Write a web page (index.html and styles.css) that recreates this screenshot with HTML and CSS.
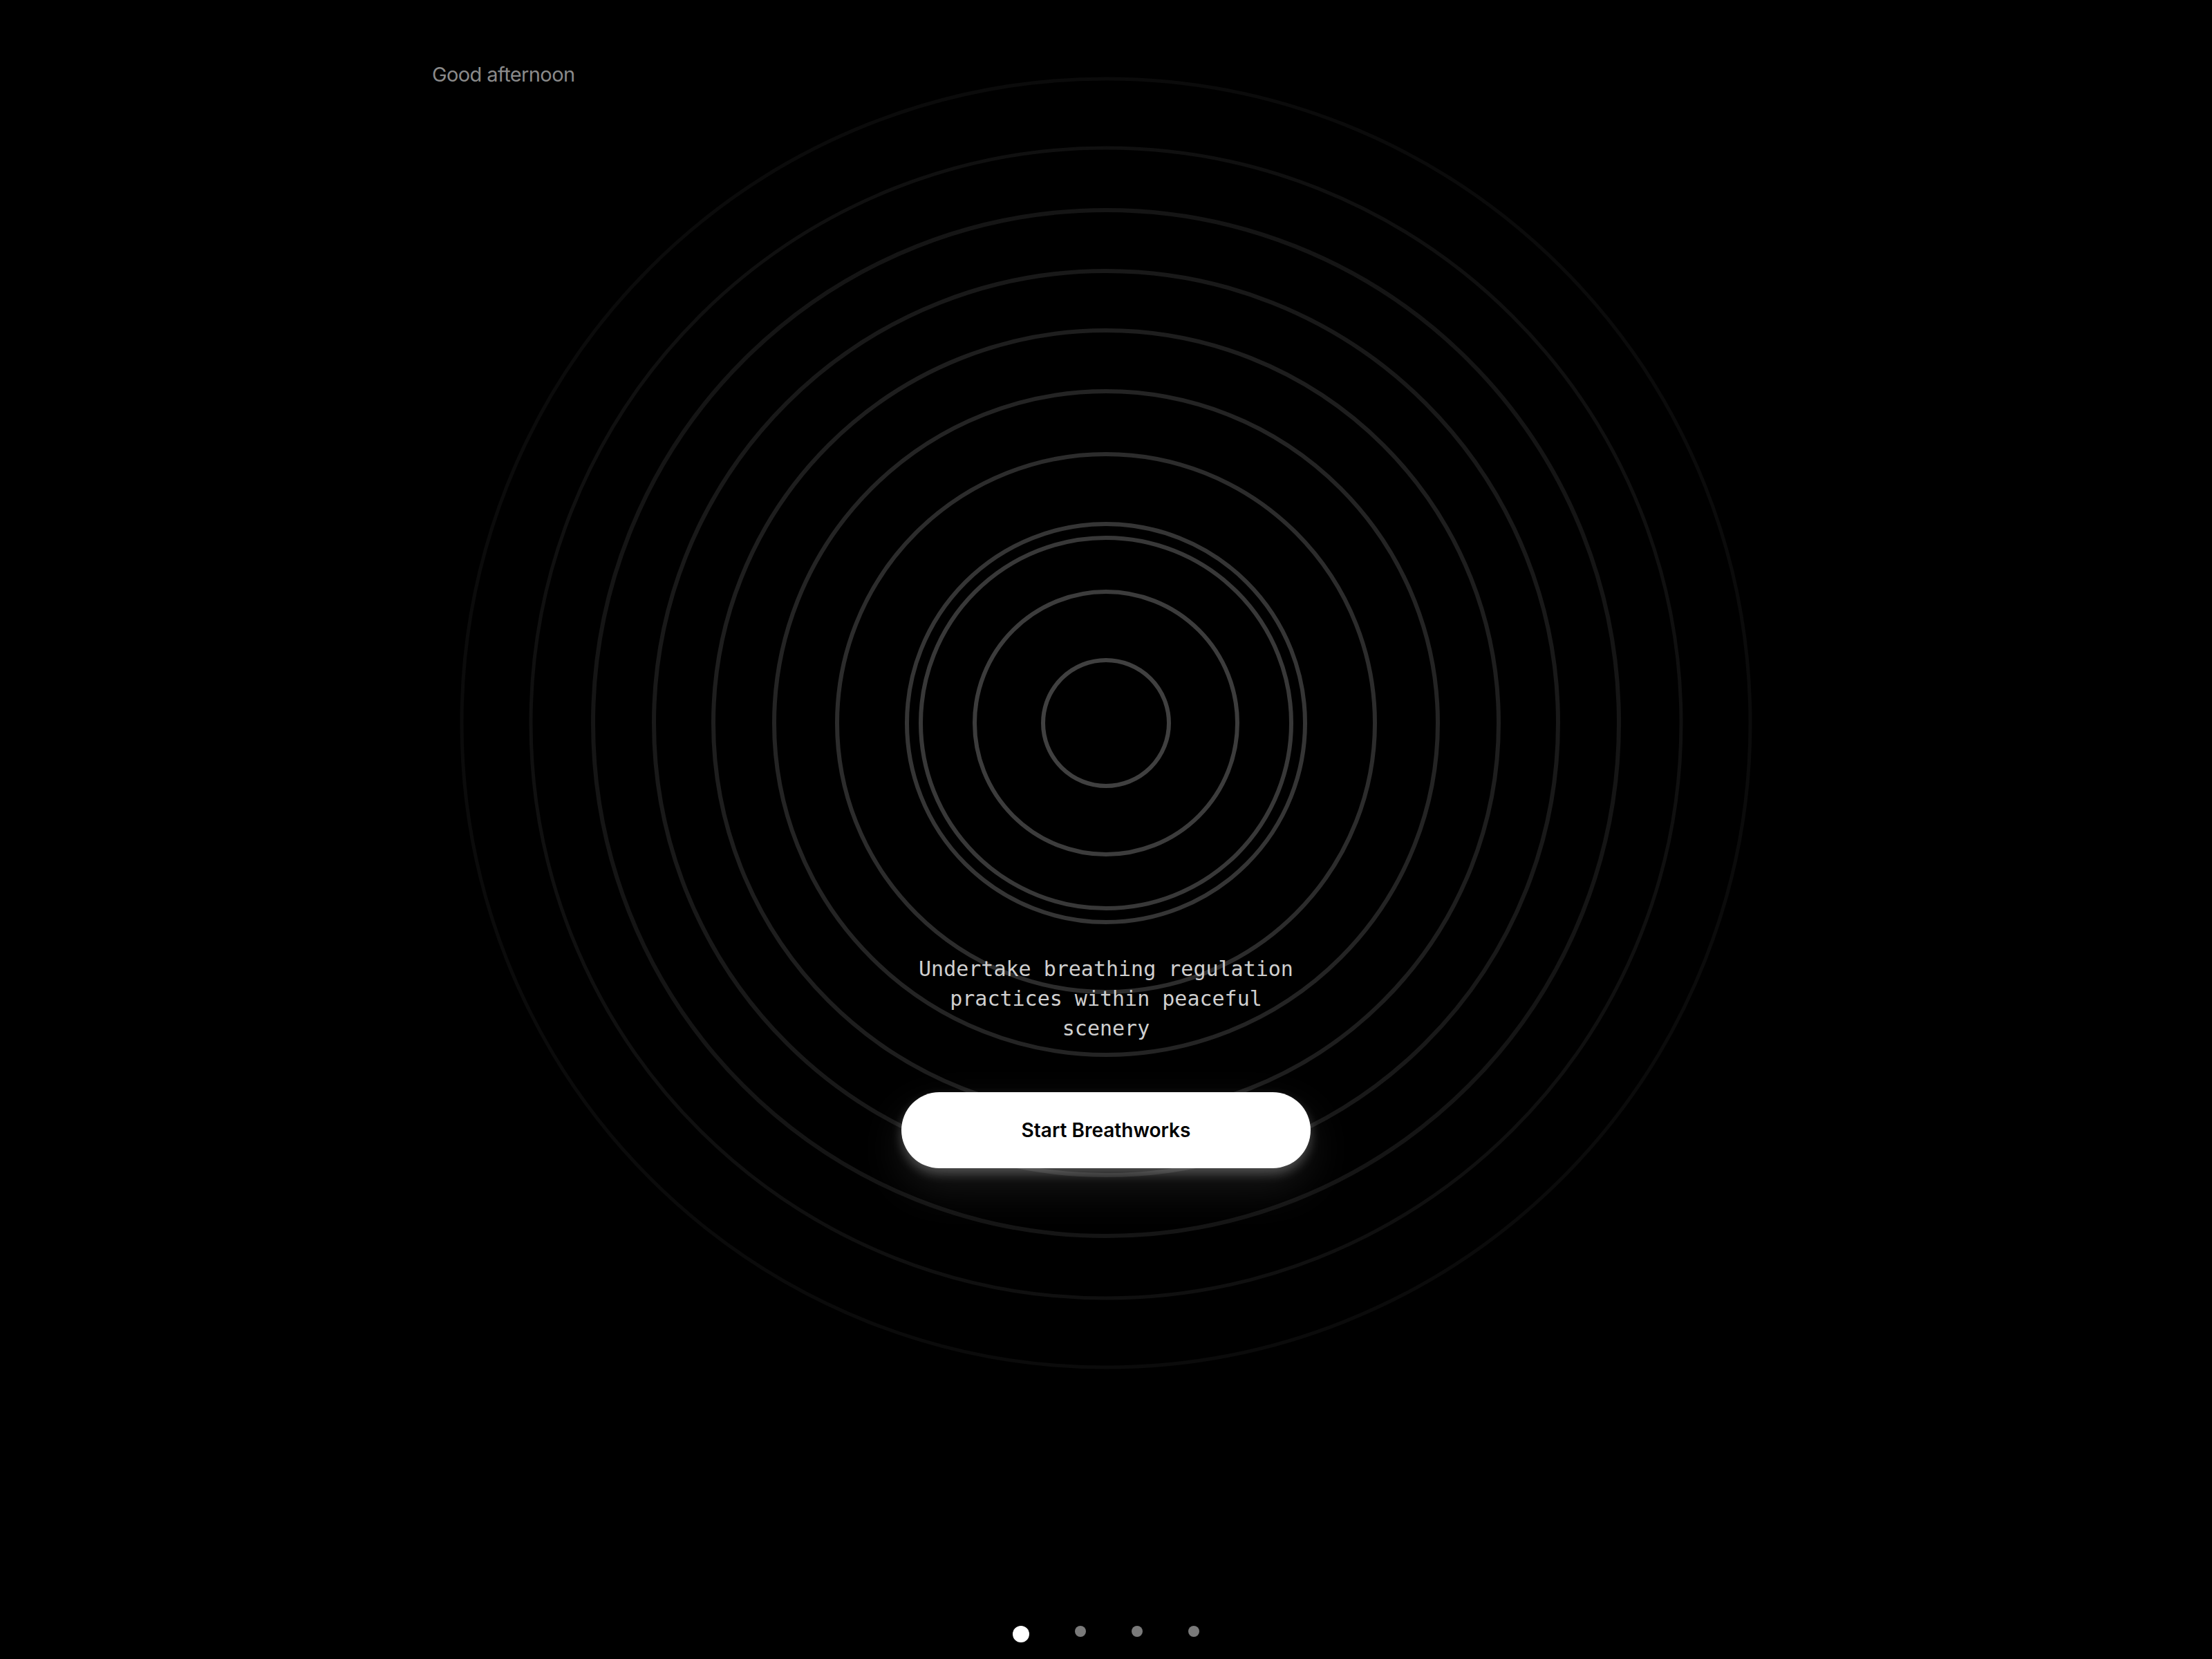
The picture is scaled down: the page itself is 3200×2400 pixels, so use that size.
FILE: index.html
```html
<!DOCTYPE html>
<html lang="en">
<head>
<meta charset="utf-8">
<title>Breathworks</title>
<link rel="stylesheet" href="styles.css">
</head>
<body>
<main class="screen">
  <svg class="rings" viewBox="0 0 1880 1880" aria-hidden="true">
    <circle cx="940" cy="940" r="932" class="r11"/>
    <circle cx="940" cy="940" r="832" class="r10"/>
    <circle cx="940" cy="940" r="742" class="r9"/>
    <circle cx="940" cy="940" r="654" class="r8"/>
    <circle cx="940" cy="940" r="568" class="r7"/>
    <circle cx="940" cy="940" r="480" class="r6"/>
    <circle cx="940" cy="940" r="389" class="r5"/>
    <circle cx="940" cy="940" r="288" class="r4"/>
    <circle cx="940" cy="940" r="268" class="r3"/>
    <circle cx="940" cy="940" r="190" class="r2"/>
    <circle cx="940" cy="940" r="91" class="r1"/>
  </svg>

  <header class="greeting">Good afternoon</header>

  <section class="intro">
    <p class="tagline">Undertake breathing regulation practices within peaceful scenery</p>
    <button class="cta" type="button">Start Breathworks</button>
  </section>

  <nav class="pager" aria-label="Pages">
    <span class="dot active"></span>
    <span class="dot"></span>
    <span class="dot"></span>
    <span class="dot"></span>
  </nav>
</main>
</body>
</html>
```

FILE: styles.css
```css
html, body {
  margin: 0;
  padding: 0;
  background: #000;
}

.screen {
  position: relative;
  width: 3200px;
  height: 2400px;
  display: flex;
  flex-direction: column;
  align-items: center;
  overflow: hidden;
  background: #000;
}

.rings {
  position: absolute;
  left: 660px;
  top: 106px;
  width: 1880px;
  height: 1880px;
  z-index: 0;
}

.rings circle {
  fill: none;
  stroke-width: 6;
}
.rings .r1 { stroke: #404040; }
.rings .r2 { stroke: #3c3c3c; }
.rings .r3 { stroke: #383838; }
.rings .r4 { stroke: #353535; }
.rings .r5 { stroke: #2c2c2c; }
.rings .r6 { stroke: #242424; }
.rings .r7 { stroke: #1e1e1e; }
.rings .r8 { stroke: #191919; }
.rings .r9 { stroke: #151515; }
.rings .r10 { stroke: #101010; stroke-width: 5; }
.rings .r11 { stroke: #0b0b0b; stroke-width: 5; }

.greeting {
  position: relative;
  z-index: 1;
  align-self: stretch;
  padding: 88px 0 0 625px;
  font-family: "Inter", "Liberation Sans", sans-serif;
  font-size: 29px;
  letter-spacing: -0.6px;
  line-height: 40px;
  color: #8a8a8a;
}

.intro {
  position: relative;
  z-index: 1;
  margin-top: 1252px;
  display: flex;
  flex-direction: column;
  align-items: center;
}

.tagline {
  margin: 0;
  width: 560px;
  text-align: center;
  font-family: "DejaVu Sans Mono", "Liberation Mono", monospace;
  font-size: 30px;
  line-height: 43px;
  color: #cfcfcf;
}

.cta {
  margin-top: 71px;
  width: 592px;
  height: 110px;
  border: none;
  border-radius: 55px;
  background: #fff;
  color: #000;
  font-family: "Inter", "Liberation Sans", sans-serif;
  font-weight: 600;
  font-size: 28px;
  cursor: pointer;
  box-shadow: 0 8px 16px rgba(255, 255, 255, 0.26), 0 26px 64px rgba(255, 255, 255, 0.1);
}

.pager {
  position: relative;
  z-index: 1;
  margin-top: auto;
  padding-bottom: 24px;
  display: flex;
  align-items: flex-start;
  gap: 66px;
}

.dot {
  width: 16px;
  height: 16px;
  border-radius: 50%;
  background: #7a7a7a;
}

.dot.active {
  width: 24px;
  height: 24px;
  background: #fff;
}
```
